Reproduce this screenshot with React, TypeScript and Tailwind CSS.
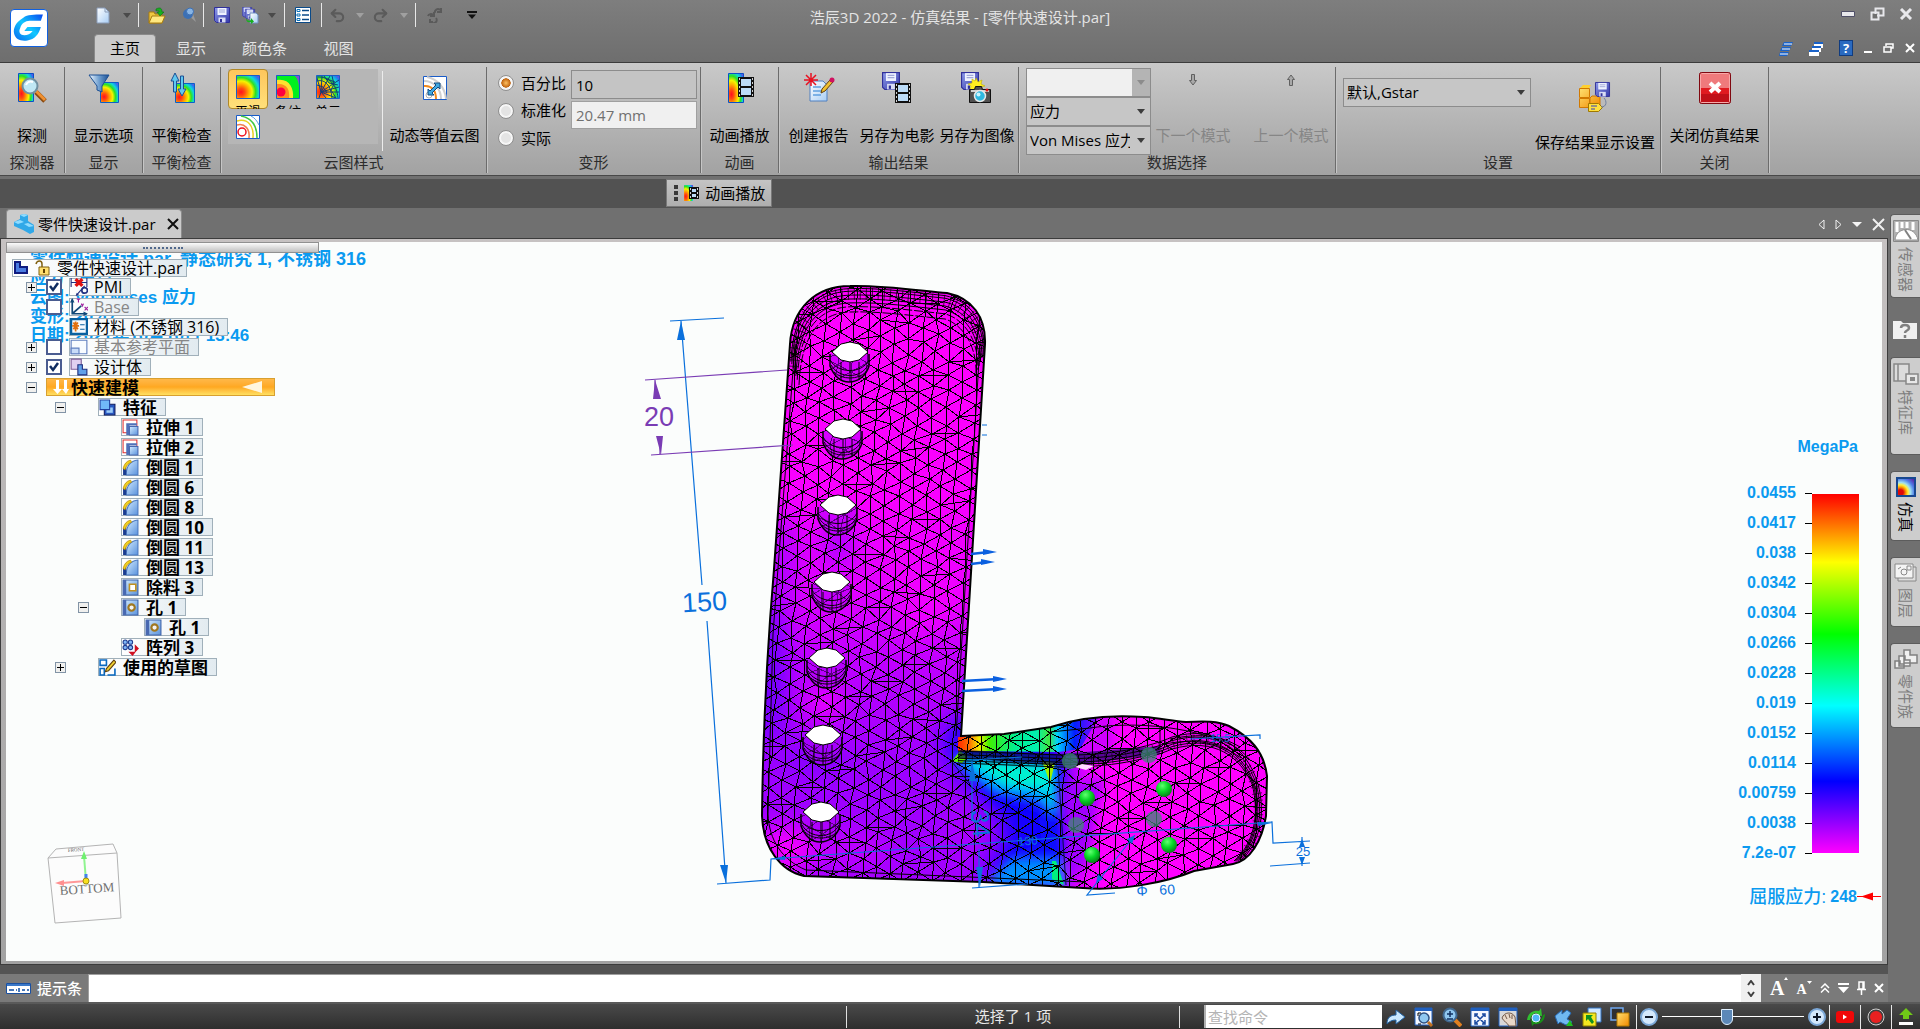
import type { ReactNode } from 'react';
import { Redo2, Undo2 } from 'lucide-react';

const blue = '#0a70dc';
const violet = '#7a3cb4';

/* ---------- shared gradients ---------- */

function Gradients() {
  return (
    <svg className="absolute h-0 w-0" aria-hidden="true">
      <defs>
        <radialGradient id="rainbow" cx="0.2" cy="0.72" r="1.05">
          <stop offset="0" stopColor="#ff1020" />
          <stop offset="0.15" stopColor="#ff4a10" />
          <stop offset="0.33" stopColor="#ffb000" />
          <stop offset="0.46" stopColor="#f4f400" />
          <stop offset="0.6" stopColor="#30e020" />
          <stop offset="0.74" stopColor="#10d8d8" />
          <stop offset="0.88" stopColor="#2080f0" />
          <stop offset="1" stopColor="#9030d0" />
        </radialGradient>
        <linearGradient id="disk" x1="0" y1="0" x2="1" y2="1">
          <stop offset="0" stopColor="#8e9bea" />
          <stop offset="1" stopColor="#3438a8" />
        </linearGradient>
        <linearGradient id="steel" x1="0" y1="0" x2="1" y2="0">
          <stop offset="0" stopColor="#f2f9ff" />
          <stop offset="0.5" stopColor="#6f9fd0" />
          <stop offset="1" stopColor="#1b4f94" />
        </linearGradient>
        <linearGradient id="paper" x1="0" y1="0" x2="1" y2="1">
          <stop offset="0" stopColor="#ffffff" />
          <stop offset="1" stopColor="#a8cdf4" />
        </linearGradient>
        <linearGradient id="solid" x1="0" y1="0" x2="1" y2="1">
          <stop offset="0" stopColor="#d4ecff" />
          <stop offset="1" stopColor="#5a92dc" />
        </linearGradient>
        <linearGradient id="gold" x1="0" y1="0" x2="1" y2="1">
          <stop offset="0" stopColor="#ffe070" />
          <stop offset="1" stopColor="#f08a00" />
        </linearGradient>
        <linearGradient id="brand" x1="1" y1="0" x2="0" y2="1">
          <stop offset="0" stopColor="#0848f0" />
          <stop offset="0.5" stopColor="#10c8ff" />
          <stop offset="1" stopColor="#0868f0" />
        </linearGradient>
        <radialGradient id="ball" cx="0.4" cy="0.3" r="0.7">
          <stop offset="0" stopColor="#60ff70" />
          <stop offset="0.5" stopColor="#08d828" />
          <stop offset="1" stopColor="#068018" />
        </radialGradient>
      </defs>
    </svg>
  );
}

type IconProps = { w?: number; h?: number; box?: string; children: ReactNode };

function Icon({ w = 16, h = w, box, children }: IconProps) {
  return (
    <svg width={w} height={h} viewBox={box ?? `0 0 ${w} ${h}`} className="shrink-0" fill="none" aria-hidden="true">
      {children}
    </svg>
  );
}

function Caret({ color = '#3c3c3c' }: { color?: string }) {
  return (
    <Icon w={8} h={5}>
      <path d="M0 0h8L4 5z" fill={color} />
    </Icon>
  );
}

function Floppy({ x = 0, y = 0, s = 16 }: { x?: number; y?: number; s?: number }) {
  return (
    <g transform={`translate(${x} ${y}) scale(${s / 16})`}>
      <path d="M0.5 0.5h15v15h-13l-2-2z" fill="url(#disk)" stroke="#30309a" />
      <path d="M3.5 1h9v7h-9z" fill="#eef2ff" />
      <path d="M5 3h6M5 5h6" stroke="#a0a8d8" />
      <path d="M4.500 10.500h7v5h-7z" fill="#d8dcf4" />
      <path d="M6 12h2v3H6z" fill="#30309a" />
    </g>
  );
}

function Film({ x, y, w, h }: { x: number; y: number; w: number; h: number }) {
  return (
    <g transform={`translate(${x} ${y})`}>
      <path d={`M0 0h${w}v${h}h-${w}z`} fill="#101010" />
      <path d={`M3 2h${w - 6}v${h / 2 - 3}h-${w - 6}zM3 ${h / 2 + 1}h${w - 6}v${h / 2 - 3}h-${w - 6}z`} fill="#bcdcf8" />
      <path d={`M1.500 1v${h - 2}M${w - 1.5} 1v${h - 2}`} stroke="#d0d0d0" strokeDasharray="2 2" />
    </g>
  );
}

/* ---------- quick access and tabs ---------- */

function QuickSeparator() {
  return <span className="h-6 w-px bg-[#e8e8e8]" />;
}

function QuickButton({ label, className, children }: { label: string; className: string; children: ReactNode }) {
  return (
    <button aria-label={label} className={`flex h-6 items-center justify-center ${className}`}>
      {children}
    </button>
  );
}

function QuickAccess() {
  return (
    <div className="flex h-[34px] items-center pb-1">
      <QuickButton label="新建" className="w-6">
        <Icon w={14} h={17}>
          <path d="M1 1h8l4 4v11H1z" fill="url(#paper)" stroke="#8a9cb8" />
          <path d="M9 1v4h4" stroke="#8a9cb8" />
        </Icon>
      </QuickButton>
      <QuickButton label="新建选项" className="w-[23px]"><Caret color="#4a4a4a" /></QuickButton>
      <QuickSeparator />
      <QuickButton label="打开" className="w-9">
        <Icon w={18}>
          <path d="M1 6h5l1 2h7v9H1z" fill="#f0c840" stroke="#a87c10" />
          <path d="M1 17l3-7h13l-3 7z" fill="#ffe880" stroke="#a87c10" />
          <path d="M8 3c4-2 6-1 6 3h2l-4 4-3-4h2c0-2-1-2-3-1z" fill="#18b020" stroke="#087010" strokeWidth=".6" />
        </Icon>
      </QuickButton>
      <QuickButton label="固定" className="w-7">
        <Icon w={16}>
          <path d="M8 9l7 6-3-8z" fill="#9a9a9a" />
          <circle cx="7" cy="7" r="5" fill="#3c70b4" />
          <circle cx="9" cy="4.500" r="3.500" fill="#88b4e4" stroke="#3c70b4" />
        </Icon>
      </QuickButton>
      <QuickSeparator />
      <QuickButton label="保存" className="w-9"><Icon w={16}><Floppy /></Icon></QuickButton>
      <QuickButton label="另存为" className="w-5">
        <Icon w={17}>
          <Floppy s={10} />
          <Floppy x={3} y={2} s={10} />
          <path d="M8 6h6l2 2v8H8z" fill="url(#paper)" stroke="#7090c0" />
          <path d="M4 11c1 3 3 3 5 2v-2l3 3.500-3 2.500v-2c-3 1-5 0-5-4z" fill="#18b020" />
        </Icon>
      </QuickButton>
      <QuickButton label="保存选项" className="w-6"><Caret color="#4a4a4a" /></QuickButton>
      <QuickSeparator />
      <QuickButton label="列表" className="w-9">
        <Icon w={16}>
          <path d="M.5.5h15v15H.5z" fill="#fff" stroke="#0a4a88" />
          <path d="M2 2.500h3v2H2zM2 7h3v2H2zM2 11.500h3v2H2z" fill="#fff" stroke="#0a70b8" />
          <path d="M7 3.500h7M7 8h7M7 12.500h7" stroke="#0a4a88" strokeWidth="1.500" />
        </Icon>
      </QuickButton>
      <QuickSeparator />
      <QuickButton label="撤销" className="w-[30px]"><Undo2 size={17} color="#5b5b5b" strokeWidth={3} /></QuickButton>
      <QuickButton label="撤销列表" className="w-4"><Caret color="#a0a0a0" /></QuickButton>
      <QuickButton label="重做" className="w-6"><Redo2 size={17} color="#5b5b5b" strokeWidth={3} /></QuickButton>
      <QuickButton label="重做列表" className="w-[23px]"><Caret color="#a0a0a0" /></QuickButton>
      <QuickSeparator />
      <QuickButton label="更新" className="w-9">
        <Icon w={16}>
          <path d="M9 6a3 3 0 0 1 5-3M15 1v4h-4M2 9a3 3 0 0 1 5-1M8 5v4H4M5 15a3 3 0 0 0 5-4M4 12v3h3" stroke="#5a5a5a" strokeWidth="2" />
        </Icon>
      </QuickButton>
      <QuickButton label="自定义快速访问" className="w-10">
        <Icon w={10} h={8}>
          <path d="M0 1h10" stroke="#111" strokeWidth="2" />
          <path d="M1 3.500h8L5 8z" fill="#111" />
        </Icon>
      </QuickButton>
    </div>
  );
}

function Header() {
  return (
    <header className="flex bg-gradient-to-b from-[#7e7e7e] to-[#6e6e6e] text-[15px] text-[#e4e4e4]">
      <div className="flex flex-1 basis-0">
        <div className="w-[91px] shrink-0 pt-[9px] pl-[10px]">
          <button aria-label="应用程序菜单" className="flex h-[38px] w-[38px] items-center justify-center rounded border border-[#1060e0] bg-white">
            <Icon w={32} h={30} box="0 -1 31 28">
              <path d="M29 0C20 0 14 0 10 3C3 7 0 13 1 18c1 6 7 8 13 7 7-1 11-6 13-13H14l-3 4h8c-2 3-5 4-8 4-4 0-6-3-4-7 1-4 5-7 9-7h11z" fill="url(#brand)" />
            </Icon>
          </button>
        </div>
        <div>
          <QuickAccess />
          <nav className="flex h-[28px] items-end pl-[3px]">
            <a href="#home" className="flex h-[28px] w-[62px] items-center justify-center rounded-t border-x border-t border-[#8a8a8a] bg-[#cbcbcb] text-black">主页</a>
            <a href="#view" className="flex h-[28px] w-[70px] items-center justify-center">显示</a>
            <a href="#colorbar" className="flex h-[28px] w-[77px] items-center justify-center">颜色条</a>
            <a href="#window" className="flex h-[28px] w-[71px] items-center justify-center">视图</a>
          </nav>
        </div>
      </div>
      <h1 className="w-[310px] shrink-0 pt-[6px] text-center text-[15px] leading-[22px] whitespace-nowrap">浩辰3D 2022 - 仿真结果 - [零件快速设计.par]</h1>
      <div className="flex flex-1 basis-0 flex-col items-end">
        <div className="flex h-[34px] items-center gap-[14px] pr-[7px] pb-[6px]">
          <button aria-label="最小化"><Icon w={15} h={6}><path d="M.5.5h13v5H.5z" fill="#e8e8ec" stroke="#505068" /></Icon></button>
          <button aria-label="还原">
            <Icon w={15} h={14}>
              <path d="M5.500 1.500h8v7h-8zM1.500 5.500h7v7h-7z" stroke="#e8e8ec" strokeWidth="2" />
              <path d="M3 7h4v4H3z" fill="#707070" />
            </Icon>
          </button>
          <button aria-label="关闭"><Icon w={14} h={12}><path d="M2 1l10 10M12 1L2 11" stroke="#e8e8ec" strokeWidth="3" /></Icon></button>
        </div>
        <div className="flex h-[28px] items-center gap-[11px] pr-[5px]">
          <button aria-label="层叠" className="mr-1">
            <Icon w={15}>
              <path d="M5 1h9l-2 4H3zM3 6h9l-2 4H1zM1 11h9l-2 4H0z" fill="#1a62c8" />
              <path d="M5 3h8M3 8h8M1 13h8" stroke="#fff" />
            </Icon>
          </button>
          <button aria-label="切换窗口" className="mr-1">
            <Icon w={15}>
              <path d="M5 1h9v6H5zM3 5h9v6H3zM0 9h10v6H0z" fill="#fff" />
              <path d="M5 1h9v2H5zM3 5h9v2H3zM0 9h10v2H0z" fill="#1a62c8" />
            </Icon>
          </button>
          <button aria-label="帮助" className="flex h-4 w-[14px] items-center justify-center border border-[#103c80] bg-[#2a6ac0] text-[13px] leading-4 font-bold text-white">?</button>
          <button aria-label="最小化文档" className="pt-2"><Icon w={8} h={3}><path d="M0 1h8" stroke="#fff" strokeWidth="2" /></Icon></button>
          <button aria-label="还原文档"><Icon w={11} h={10}><path d="M3 3V1h7v4H8M1 4h7v5H1z" stroke="#fff" strokeWidth="1.500" /></Icon></button>
          <button aria-label="关闭文档"><Icon w={10}><path d="M1 1l8 8M9 1L1 9" stroke="#fff" strokeWidth="2" /></Icon></button>
        </div>
      </div>
    </header>
  );
}

/* ---------- ribbon ---------- */

function Group({ label, width, children }: { label: string; width: string; children: ReactNode }) {
  return (
    <section className={`flex shrink-0 flex-col border-r border-[#6c6c6c] shadow-[1px_0_0_#c6c6c6] ${width}`}>
      <div className="flex h-[85px] justify-center">{children}</div>
      <h2 className="text-center text-[15px] leading-5 whitespace-nowrap text-[#2c2c2c]">{label}</h2>
    </section>
  );
}

function RibbonButton({ label, width = 'w-full', children }: { label: string; width?: string; children: ReactNode }) {
  return (
    <button className={`flex shrink-0 flex-col items-center gap-[19px] pt-[3px] whitespace-nowrap disabled:text-[#868686] ${width}`}>
      <span className="flex h-9 items-center">{children}</span>
      <span className="text-[15px] leading-5">{label}</span>
    </button>
  );
}

function DropDown({ label, options, width, disabled }: { label: string; options: string[]; width: string; disabled?: boolean }) {
  return (
    <div className={`relative h-[29px] ${width}`}>
      <select
        aria-label={label}
        disabled={disabled}
        className="h-full w-full appearance-none border border-[#8c8c8c] bg-[#c6c6c6] pr-5 pl-[3px] text-[15px] text-black disabled:bg-[#f0f0f0]"
      >
        {options.map((o) => <option key={o}>{o}</option>)}
      </select>
      <span className={`pointer-events-none absolute inset-y-px right-px flex w-[18px] items-center justify-center ${disabled ? 'bg-[#b4b4b4]' : ''}`}>
        <Caret color={disabled ? '#8c8c8c' : '#3c3c3c'} />
      </span>
    </div>
  );
}

function Contour({ children }: { children?: ReactNode }) {
  return (
    <Icon w={24}>
      <path d="M.5.5h23v23H.5z" fill="url(#rainbow)" />
      {children}
      <path d="M.5.5h23v23H.5z" stroke="#1a5cc8" />
    </Icon>
  );
}

function Gallery() {
  const items = [
    { name: '平滑', icon: <Contour /> },
    {
      name: '条纹',
      icon: (
        <Contour>
          <path d="M1 1h22v22H1z" fill="#8050d0" />
          <path d="M1 1h18c3 3 4 8 4 12v10H1z" fill="#00f020" />
          <path d="M1 5c12-2 17 8 16 18H1z" fill="#ffe030" />
          <path d="M1 9c10-1 13 6 12 14H1z" fill="#ff8a20" />
          <circle cx="5" cy="17" r="4.500" fill="#ff0040" />
        </Contour>
      ),
    },
    {
      name: '单元',
      icon: (
        <Contour>
          <path d="M5 17L1 3M5 17L6 1M5 17L14 1M5 17L23 5M5 17L23 12M5 17h18M5 17l15 6M5 17l5 6M5 17l-2 6M1 10l6 2 4 6M1 6c8-2 14 4 15 17M1 2c12-1 20 8 21 21M8 1l5 7 9 2M16 1l2 8-3 6 5 8M11 4l8 3" stroke="#104078" />
        </Contour>
      ),
    },
  ];
  return (
    <div className="mt-[2px] h-[75px] w-[150px] overflow-hidden bg-[#b6b6b6]">
      <div className="flex h-10 overflow-hidden">
        {items.map((item, i) => (
          <button
            key={item.name}
            className={
              i === 0
                ? 'flex w-10 flex-col items-center rounded-sm border border-[#b08828] bg-gradient-to-b from-[#fdc65c] to-[#ffe07a] pt-[5px] text-[13px] leading-4'
                : 'flex w-10 flex-col items-center pt-[6px] text-[13px] leading-4'
            }
          >
            {item.icon}
            <span className="mt-1">{item.name}</span>
          </button>
        ))}
      </div>
      <button aria-label="等值线" className="flex w-10 justify-center pt-[6px]">
        <Icon w={24}>
          <path d="M.5.5h23v23H.5z" fill="#fff" stroke="#1a5cc8" />
          <circle cx="6" cy="17" r="4" stroke="#f01020" strokeWidth="1.500" />
          <path d="M1 10c8-2 13 4 12 13" stroke="#f08050" strokeWidth="1.500" />
          <path d="M1 6c11-3 17 5 16 17" stroke="#e8d020" strokeWidth="1.500" />
          <path d="M5 1c11 2 16 9 16 22" stroke="#40c840" strokeWidth="1.500" />
          <path d="M15 1c4 2 6 5 8 9" stroke="#50a0e0" />
        </Icon>
      </button>
    </div>
  );
}

function Deformation() {
  const modes = ['百分比', '标准化', '实际'];
  return (
    <div className="flex w-full pt-[2px] pl-[11px]">
      <div className="flex w-[73px] flex-col">
        {modes.map((m, i) => (
          <label key={m} className="flex h-[29px] items-center gap-[7px] text-[15px] whitespace-nowrap">
            <input
              type="radio"
              name="deformation"
              defaultChecked={i === 0}
              className="h-4 w-4 shrink-0 appearance-none rounded-full border border-[#8e8e8e] bg-[#e4e4e4] shadow-[inset_0_0_0_2px_#f6f6f6] checked:bg-[radial-gradient(circle,#ffc060_0%,#c06410_45%,#f0f0f0_50%)]"
            />
            {m}
          </label>
        ))}
      </div>
      <div className="flex w-[126px] flex-col gap-[2px] pt-px">
        <input aria-label="百分比值" defaultValue="10" className="h-[29px] w-full border border-[#8c8c8c] bg-[#c4c4c4] px-1 text-[15px]" />
        <input aria-label="标准化值" defaultValue="20.47 mm" disabled className="h-[28px] w-full border border-[#a0a0a0] bg-[#f0f0f0] px-1 text-[15px] text-[#707070]" />
      </div>
    </div>
  );
}

function Ribbon() {
  return (
    <div className="flex h-[114px] overflow-hidden border-t border-b border-t-[#3c3c3c] border-b-[#484848] bg-gradient-to-b from-[#c9c9c9] to-[#a2a2a2] pt-1 pb-[2px]">
      <Group label="探测器" width="w-[65px]">
        <RibbonButton label="探测">
          <Icon w={32}>
            <path d="M2.500 1.500h15v28h-15z" fill="url(#rainbow)" stroke="#0a50c8" />
            <path d="M20 20l9 9" stroke="#8a4a10" strokeWidth="5" />
            <path d="M20 19l9 9" stroke="#f09030" strokeWidth="3" />
            <circle cx="14" cy="14" r="7.500" fill="#c0e8f4" stroke="#7090a0" strokeWidth="2" />
            <path d="M10 13c1-3 4-4 7-3" stroke="#fff" strokeWidth="2" />
          </Icon>
        </RibbonButton>
      </Group>
      <Group label="显示" width="w-[78px]">
        <RibbonButton label="显示选项">
          <Icon w={32}>
            <path d="M12.500 10.500h18v20h-18z" fill="url(#rainbow)" stroke="#0a60c8" />
            <path d="M1 3h20l-7 11v6l-5-2v-4z" fill="url(#steel)" stroke="#1b4f94" />
          </Icon>
        </RibbonButton>
      </Group>
      <Group label="平衡检查" width="w-[78px]">
        <RibbonButton label="平衡检查">
          <Icon w={28} h={32}>
            <path d="M7.500 11.500h19v19h-19z" fill="url(#rainbow)" stroke="#0a60c8" />
            <path d="M7 1l4 8H8.500v11h-3V9H3z" fill="#60c8f0" stroke="#1b4f94" />
            <path d="M14 24l-4-7h2.500V4h3v13H18z" fill="#60c8f0" stroke="#1b4f94" />
          </Icon>
        </RibbonButton>
      </Group>
      <Group label="云图样式" width="w-[266px]">
        <div className="flex w-full pl-[7px]">
          <Gallery />
          <span className="mt-1 ml-1 h-20 w-px bg-[#ececec]" />
          <RibbonButton label="动态等值云图" width="w-[103px]">
            <Icon w={24}>
              <path d="M.5.5h23v23H.5z" fill="#fff" stroke="#1a5cc8" />
              <path d="M4 1c10 2 18 10 19 22M1 5c10 0 17 8 17 18" stroke="#d0d0d0" strokeWidth="2" />
              <path d="M1 10c8-1 12 5 12 13" stroke="#f08a20" strokeWidth="2" />
              <circle cx="6" cy="19" r="3" stroke="#b0b0b0" />
              <path d="M5 19v-6l2 2 6-6-2-2h6v6l-2-2-6 6 2 2z" fill="#40a8e0" stroke="#104a80" />
            </Icon>
          </RibbonButton>
        </div>
      </Group>
      <Group label="变形" width="w-[214px]"><Deformation /></Group>
      <Group label="动画" width="w-[78px]">
        <RibbonButton label="动画播放">
          <Icon w={30} h={32}>
            <path d="M3.500 1.500h15v29h-15z" fill="url(#rainbow)" stroke="#0a50c8" />
            <Film x={13} y={5} w={16} h={20} />
          </Icon>
        </RibbonButton>
      </Group>
      <Group label="输出结果" width="w-[240px]">
        <RibbonButton label="创建报告" width="w-[77px]">
          <Icon w={32}>
            <path d="M7 9h13l4 4v16H7z" fill="url(#paper)" stroke="#5080c0" />
            <path d="M10 15h8M10 19h10M10 23h8" stroke="#60a0e0" strokeWidth="1.500" />
            <path d="M8 1v13M1 8h14M3 3l10 10M13 3L3 13" stroke="#e81020" strokeWidth="1.500" />
            <path d="M18 21l1-4 8-9 3 2-8 9z" fill="#f0c030" stroke="#604010" />
            <circle cx="29" cy="8" r="2.500" fill="#d01060" />
          </Icon>
        </RibbonButton>
        <RibbonButton label="另存为电影" width="w-[80px]">
          <Icon w={30} h={32}><Floppy s={18} /><Film x={13} y={11} w={16} h={20} /></Icon>
        </RibbonButton>
        <RibbonButton label="另存为图像" width="w-[80px]">
          <Icon w={32}>
            <Floppy s={18} />
            <path d="M15 6l2 4 4-2-1 4 4 2-5 1 1 3H9l1-4-3-2 4-1 0-4 3 2z" fill="#ffee20" stroke="#c0b000" strokeWidth=".6" />
            <path d="M8.500 17.500h5l1-3h6l1 3h8v13h-21z" fill="#505050" stroke="#101010" />
            <path d="M10 19h18" stroke="#d0d0d0" strokeWidth="2" />
            <circle cx="19" cy="24" r="5.500" fill="#30b8e0" stroke="#e8e8e8" strokeWidth="1.500" />
            <circle cx="17.500" cy="22.500" r="2" fill="#c8f4ff" />
            <circle cx="26" cy="18" r="1.500" fill="#e01010" />
          </Icon>
        </RibbonButton>
      </Group>
      <Group label="数据选择" width="w-[317px]">
        <div className="flex w-full pl-[7px]">
          <div className="mt-px flex h-[87px] w-[125px] shrink-0 flex-col">
            <DropDown label="模式" options={['']} width="w-full" disabled />
            <DropDown label="结果类型" options={['应力', '位移']} width="w-full" />
            <DropDown label="结果分量" options={['Von Mises 应力', '最大主应力']} width="w-full" />
          </div>
          <div className="ml-1 flex gap-[22px] text-[#868686]">
            <RibbonButton label="下一个模式" width="w-[76px]">
              <span className="pb-4"><Icon w={8} h={12}><path d="M2.500 .5h3v6H7.500L4 11 .5 6.500h2z" fill="#a8a8a8" stroke="#606060" /></Icon></span>
            </RibbonButton>
            <RibbonButton label="上一个模式" width="w-[76px]">
              <span className="pb-4"><Icon w={8} h={12}><path d="M2.500 11.500h3v-6H7.500L4 1 .5 5.500h2z" fill="#a8a8a8" stroke="#606060" /></Icon></span>
            </RibbonButton>
          </div>
        </div>
      </Group>
      <Group label="设置" width="w-[325px]">
        <div className="flex w-full pt-[10px] pl-[7px]">
          <div className="pt-px"><DropDown label="设置方案" options={['默认,Gstar', '默认']} width="w-[188px]" /></div>
          <RibbonButton label="保存结果显示设置" width="w-[128px]">
            <Icon w={32}>
              <path d="M1 7l3-3h8l-2 3v19H1z" fill="#ffd030" />
              <path d="M.5 7.500h10v9H.5zM.5 17.500h10v9H.5zM11 17l2-2h8v10H11z" fill="url(#gold)" stroke="#d07800" />
              <Floppy x={16} y={1} s={15} />
              <path d="M9.500 22.500h10l4 4-4 4h-10z" fill="#ffe040" stroke="#a07800" />
              <path d="M12 25h6M12 28h4" stroke="#3040c0" />
              <path d="M22 26c6 0 6-6 3-9" stroke="#7080a0" />
            </Icon>
          </RibbonButton>
        </div>
      </Group>
      <Group label="关闭" width="w-[108px]">
        <RibbonButton label="关闭仿真结果">
          <Icon w={32}>
            <rect x=".5" y=".5" width="31" height="31" rx="2" fill="#c01018" stroke="#800810" />
            <path d="M2 2h28v14H2z" fill="#ef7a7c" />
            <path d="M2 16h28v6H2z" fill="#e01a20" />
            <path d="M11 11l10 9M21 11l-10 9" stroke="#fff" strokeWidth="4" />
            <rect x="1.500" y="1.500" width="29" height="29" rx="1" stroke="#f8a8a8" />
          </Icon>
        </RibbonButton>
      </Group>
    </div>
  );
}

/* ---------- feature tree ---------- */

type NodeKind = 'part' | 'pmi' | 'base' | 'material' | 'plane' | 'body' | 'mode' | 'feature' | 'extrude' | 'round' | 'cut' | 'hole' | 'pattern' | 'sketch';

type TreeRow = {
  name: string;
  kind: NodeKind;
  indent: string;
  toggle?: '+' | '-';
  check?: boolean;
  dim?: boolean;
};

// space in front of the toggle, one step per level
const L1 = 'pl-5';
const L2 = 'pl-[49px]';
const L3 = 'pl-[72px]';
const L4 = 'pl-[95px]';

const rows: TreeRow[] = [
  { name: 'PMI', kind: 'pmi', indent: L1, toggle: '+', check: true },
  { name: 'Base', kind: 'base', indent: L1, check: false, dim: true },
  { name: '材料 (不锈钢 316)', kind: 'material', indent: L1 },
  { name: '基本参考平面', kind: 'plane', indent: L1, toggle: '+', check: false, dim: true },
  { name: '设计体', kind: 'body', indent: L1, toggle: '+', check: true },
  { name: '快速建模', kind: 'mode', indent: L1, toggle: '-' },
  { name: '特征', kind: 'feature', indent: L2, toggle: '-' },
  { name: '拉伸 1', kind: 'extrude', indent: L3 },
  { name: '拉伸 2', kind: 'extrude', indent: L3 },
  { name: '倒圆 1', kind: 'round', indent: L3 },
  { name: '倒圆 6', kind: 'round', indent: L3 },
  { name: '倒圆 8', kind: 'round', indent: L3 },
  { name: '倒圆 10', kind: 'round', indent: L3 },
  { name: '倒圆 11', kind: 'round', indent: L3 },
  { name: '倒圆 13', kind: 'round', indent: L3 },
  { name: '除料 3', kind: 'cut', indent: L3 },
  { name: '孔 1', kind: 'hole', indent: L3, toggle: '-' },
  { name: '孔 1', kind: 'hole', indent: L4 },
  { name: '阵列 3', kind: 'pattern', indent: L3 },
  { name: '使用的草图', kind: 'sketch', indent: L2, toggle: '+' },
];

const nodeArt: Record<NodeKind, ReactNode> = {
  part: <path d="M2 2h5v5h7v6H2z" fill="#4a7ce0" stroke="#101c80" strokeWidth="2" />,
  pmi: (
    <>
      <path d="M1 0v8M15 0v8M1 4h14M6 15l7-8" stroke="#203080" />
      <path d="M5 1l6 6M11 1L5 7" stroke="#e01010" strokeWidth="3" />
      <circle cx="13" cy="11" r="2.500" stroke="#203080" strokeWidth="1.500" />
      <path d="M5 16l3-1-2-2z" fill="#203080" />
    </>
  ),
  base: (
    <>
      <path d="M2 1v13h13M2 14l8-7" stroke="#104878" strokeWidth="1.500" />
      <path d="M0 4l2-4 2 4zM12 12l4 2-4 2z" fill="#104878" />
      <path d="M6 1h3M7.500 1v3M10 5l1 2 1-2M13 8l3 3M16 8l-3 3" stroke="#a020a0" />
    </>
  ),
  material: (
    <>
      <path d="M1 1h14v13H1z" fill="#f4faff" stroke="#0860a0" strokeWidth="2" />
      <path d="M5 3v9M2 7h6M3 4l4 6M7 4l-4 6" stroke="#e07010" strokeWidth="1.500" />
      <path d="M9 6h4M9 10h4" stroke="#0860a0" />
    </>
  ),
  plane: (
    <>
      <path d="M1 2h14v12H1z" fill="#f8fcff" stroke="#6080c0" />
      <path d="M1 9h7v5H1z" fill="#c8dcf8" stroke="#6080c0" />
    </>
  ),
  body: (
    <>
      <path d="M1 1h9v9H1z" fill="#e0d0f0" stroke="#806098" />
      <path d="M7 6h4v4h4v5H7z" fill="#60a0e8" stroke="#203080" />
    </>
  ),
  mode: <path d="M3 1v9H0l4.500 5L9 10H6V1zM11 1v9H9l4 5 3-5h-2V1z" fill="#fff" />,
  feature: (
    <>
      <path d="M5 5h10v10H5z" fill="#2858c0" stroke="#101c60" />
      <path d="M7 8h6v5H7z" fill="#9cccf8" />
      <path d="M1 1h9v9H1z" fill="#70b8f8" stroke="#2040a0" />
    </>
  ),
  extrude: (
    <>
      <path d="M1 1h13v12H1z" fill="#fff" stroke="#e03030" />
      <path d="M4 4h10v2H7v9H4z" fill="#5070b8" />
      <path d="M7 7h8v8H7z" fill="url(#solid)" stroke="#4868b0" />
    </>
  ),
  round: (
    <>
      <path d="M15 1v14H4c0-7 3-13 11-14z" fill="url(#solid)" stroke="#4a78c0" />
      <path d="M1 15V9l3-2v8z" fill="#1a3c90" />
      <path d="M1 9c1-4 3-7 7-8l1 2C6 4 4 6 3 10z" fill="#f0d020" stroke="#b08000" strokeWidth=".6" />
    </>
  ),
  cut: (
    <>
      <path d="M1 1h14v14H1z" fill="url(#solid)" stroke="#3a60a8" />
      <path d="M1 1h3v14H1z" fill="#4868b0" />
      <path d="M7 5h6v6H7z" fill="#fff" stroke="#c09020" strokeWidth="1.500" />
    </>
  ),
  hole: (
    <>
      <path d="M1 1h14v14H1z" fill="url(#solid)" stroke="#3a60a8" />
      <path d="M1 1h3v14H1z" fill="#4868b0" />
      <circle cx="9" cy="8" r="3" fill="#f4f4f4" stroke="#a07820" strokeWidth="2" />
    </>
  ),
  pattern: (
    <>
      <g fill="#80b8f8" stroke="#203c90">
        <circle cx="3" cy="3" r="2" /><circle cx="8" cy="3" r="2" /><circle cx="3" cy="8" r="2" /><circle cx="8" cy="8" r="2" />
      </g>
      <path d="M12 5l4 4-4 4zM6 12h7l-3 4z" fill="#d01020" />
    </>
  ),
  sketch: (
    <>
      <path d="M1 1h6v5H1zM1 9h4v6H1zM8 15h7V9" stroke="#0868c0" strokeWidth="1.500" />
      <path d="M6 12l1-3 7-8 2 2-7 8z" fill="#f0d030" stroke="#604010" />
    </>
  ),
};

const boxStyle = 'flex h-[18px] items-center border border-[#a0b0ba] bg-gradient-to-r from-white to-[#e2ebf0] leading-none whitespace-nowrap';

function Toggle({ sign }: { sign?: '+' | '-' }) {
  if (!sign) return <span className="w-[11px] shrink-0" />;
  return (
    <button aria-label={sign === '+' ? '展开' : '折叠'} className="h-[11px] w-[11px] shrink-0 border border-[#8294a6] bg-[#f0f0ee]">
      <Icon w={9}><path d={sign === '+' ? 'M1 4.500h7M4.500 1v7' : 'M1 4.500h7'} stroke="#000" /></Icon>
    </button>
  );
}

function TreeNode({ row }: { row: TreeRow }) {
  const { name, kind, indent, toggle, check, dim } = row;
  if (kind === 'mode') {
    return (
      <li className={`flex h-5 items-center gap-[9px] ${indent}`}>
        <Toggle sign={toggle} />
        <div className="flex h-[18px] w-[229px] items-center border border-[#d8a030] bg-gradient-to-b from-[#ffb848] via-[#ffa820] to-[#ffe060] pl-[6px] font-bold">
          <Icon w={16}>{nodeArt.mode}</Icon>
          <span className="ml-[2px] flex-1 text-[17px] leading-none">{name}</span>
          <span className="pr-3"><Icon w={20} h={12}><path d="M0 6L20 0v12z" fill="#fff6e0" /></Icon></span>
        </div>
      </li>
    );
  }
  if (indent === L1) {
    return (
      <li className={`flex h-5 items-center ${indent}`}>
        <Toggle sign={toggle} />
        {check === undefined ? (
          <span className="w-8 shrink-0" />
        ) : (
          <span className="relative mr-[7px] ml-[9px] h-4 w-4 shrink-0">
            <input type="checkbox" aria-label={name} defaultChecked={check} className="peer block h-4 w-4 appearance-none border-2 border-[#4a5c90] bg-white" />
            <svg viewBox="0 0 16 16" className="pointer-events-none invisible absolute inset-0 h-4 w-4 peer-checked:visible" fill="none">
              <path d="M4 7l3 4 5-7" stroke="#102c60" strokeWidth="2.500" />
            </svg>
          </span>
        )}
        <div className={`${boxStyle} pr-2 ${dim ? 'text-[#868686]' : ''}`}>
          <Icon w={18} box="0 0 16 16">{nodeArt[kind]}</Icon>
          <span className="ml-[6px]">{name}</span>
        </div>
      </li>
    );
  }
  return (
    <li className={`flex h-5 items-center gap-8 ${indent}`}>
      <Toggle sign={toggle} />
      <div className={`${boxStyle} pr-2 text-[17px] font-bold`}>
        <Icon w={17} box="0 0 16 16">{nodeArt[kind]}</Icon>
        <span className="ml-[7px]">{name}</span>
      </div>
    </li>
  );
}

function FeatureTree() {
  return (
    <aside className="relative w-[313px] text-[16px]">
      <div className="flex h-[11px] items-center justify-center border border-[#909090] bg-gradient-to-b from-[#fafafa] to-[#c0c0c0]">
        <span className="w-10 border-t-2 border-dotted border-[#50688c]" />
      </div>
      <div className="pt-[6px] pl-[6px]">
        <div className={`${boxStyle} w-[175px]`}>
          <Icon w={16}>{nodeArt.part}</Icon>
          <span className="mx-[6px]">
            <Icon w={16}>
              <path d="M4 7h10v8H4z" fill="#ffe070" stroke="#806010" />
              <path d="M1 4c1-4 6-4 6 0v3" stroke="#806010" strokeWidth="1.500" />
              <path d="M9 9v4" stroke="#604000" strokeWidth="2" />
            </Icon>
          </span>
          零件快速设计.par
        </div>
      </div>
      <ul>
        {rows.map((row, i) => <TreeNode key={i} row={row} />)}
      </ul>
    </aside>
  );
}

/* ---------- model ---------- */

const outline =
  'M790 345C792 310 815 287 850 287C880 286 915 291 947 294C972 299 986 318 985 345L961 737L1004 735L1051 728C1080 718 1115 716 1144 718C1160 719 1172 722 1186 723C1205 722 1218 722 1229 727C1250 738 1264 752 1267 777L1266 817C1262 842 1250 862 1233 865L1194 872C1165 884 1120 892 1083 889L983 883L804 877C780 872 763 848 762 817C763 730 768 640 774 570Z';

const holes = [
  [850, 353], [843, 430], [838, 506], [832, 583], [827, 659], [823, 736], [821, 813],
];

function jitter(i: number, j: number, k: number) {
  const n = Math.sin(i * 127.1 + j * 311.7 + k * 74.7) * 43758.5453;
  return (n - Math.floor(n) - 0.5) * 4.5;
}

function meshPoint(i: number, j: number) {
  const y = 262 + j * 16 + (i % 2 ? 8 : 0);
  const x = 772 + (i - 2) * 14 - (y - 290) * 0.062;
  return [x + jitter(i, j, 1), y - (x - 770) * 0.03 + jitter(i, j, 2)];
}

function buildMesh() {
  let d = '';
  for (let i = 0; i < 44; i++) {
    for (let j = 0; j < 44; j++) {
      if (j < 26 && i > 20) continue;
      const [x, y] = meshPoint(i, j);
      const to = [meshPoint(i, j + 1), meshPoint(i + 1, j), meshPoint(i + 1, i % 2 ? j + 1 : j - 1)];
      // extra spokes give some nodes the denser star pattern
      if ((i * 7 + j * 5) % 9 === 0) to.push(meshPoint(i + 2, j));
      for (const [tx, ty] of to) d += `M${x.toFixed(0)} ${y.toFixed(0)}L${tx.toFixed(0)} ${ty.toFixed(0)}`;
    }
  }
  return d;
}

const mesh = buildMesh();

function topRim(t: number) {
  const dx = t * 9;
  const dy = t * 26;
  return `M${790 + dx} ${360 + dy}C${792 + dx} ${310 + dy} ${815 + dx / 2} ${288 + dy} 850 ${287 + dy}C880 ${286 + dy} 915 ${291 + dy} 945 ${294 + dy}C${970 - dx} ${299 + dy} ${986 - dx} ${318 + dy} ${985 - dx} ${350 + dy}`;
}

function armRim(t: number) {
  const s = t * 12;
  return `M958 ${752 + s}L1060 ${756 + s}C1110 ${757 + s} 1150 ${748 + s} 1172 ${738 + s}C1215 ${726 + s} ${1246 - s / 2} ${746 + s} ${1258 - s / 2} 785C${1266 - s / 2} 815 ${1260 - s / 2} 845 ${1240 - s / 2} 862`;
}

function Ball({ x, y, faded }: { x: number; y: number; faded?: boolean }) {
  return <circle cx={x} cy={y} r="8" fill={faded ? '#408878' : 'url(#ball)'} opacity={faded ? 0.75 : 1} />;
}

function LoadArrow({ x, y, len }: { x: number; y: number; len: number }) {
  return (
    <g>
      <path d={`M${x} ${y}l${len - 8} -2`} stroke="#0a60e0" strokeWidth="2.500" />
      <path d={`M${x + len - 14} ${y - 5}l14 3l-14 3z`} fill="#0a60e0" />
    </g>
  );
}

function Model() {
  return (
    <svg viewBox="620 270 720 640" className="absolute top-[27px] left-[614px] h-[640px] w-[720px]" fill="none" aria-label="应力云图">
      <defs>
        <clipPath id="part"><path d={outline} /></clipPath>
        <filter id="soft" x="-40%" y="-40%" width="180%" height="180%"><feGaussianBlur stdDeviation="12" /></filter>
        <filter id="fine" x="-40%" y="-40%" width="180%" height="180%"><feGaussianBlur stdDeviation="5" /></filter>
        <linearGradient id="body" gradientUnits="userSpaceOnUse" x1="900" y1="290" x2="860" y2="890">
          <stop offset="0" stopColor="#ff00ff" />
          <stop offset="0.35" stopColor="#f800ff" />
          <stop offset="0.5" stopColor="#e000ff" />
          <stop offset="0.65" stopColor="#b800ff" />
          <stop offset="0.8" stopColor="#9c00ff" />
          <stop offset="1" stopColor="#a400ff" />
        </linearGradient>
        <linearGradient id="strip" gradientUnits="userSpaceOnUse" x1="958" y1="0" x2="1100" y2="0">
          <stop offset="0" stopColor="#ff2800" />
          <stop offset="0.08" stopColor="#ff7000" />
          <stop offset="0.15" stopColor="#f0f000" />
          <stop offset="0.22" stopColor="#40f000" />
          <stop offset="0.4" stopColor="#00f090" />
          <stop offset="0.55" stopColor="#00f0b0" />
          <stop offset="0.64" stopColor="#40e840" />
          <stop offset="0.7" stopColor="#00d0ff" />
          <stop offset="0.82" stopColor="#0020ff" />
          <stop offset="1" stopColor="#a000ff" />
        </linearGradient>
      </defs>

      <g clipPath="url(#part)">
        <path d={outline} fill="url(#body)" />
        <g filter="url(#soft)">
          <path d="M1075 690h220v220h-230l20-60z" fill="#ff00ff" />
          <path d="M885 540l85-20v90l-60 30z" fill="#f000ff" />
          <ellipse cx="770" cy="670" rx="14" ry="80" fill="#6400ff" />
          <ellipse cx="782" cy="560" rx="14" ry="50" fill="#a800ff" />
          <ellipse cx="838" cy="545" rx="16" ry="24" fill="#a800ff" />
          <ellipse cx="824" cy="704" rx="15" ry="16" fill="#ff00ff" />
          <ellipse cx="785" cy="850" rx="30" ry="22" fill="#f800ff" />
          <ellipse cx="850" cy="850" rx="40" ry="14" fill="#c400ff" />
          <ellipse cx="815" cy="760" rx="30" ry="12" fill="#7c00ff" />
          <path d="M940 745l20-30 110 30 8 135h-100l24-44-30-46z" fill="#1400ff" />
          <ellipse cx="970" cy="835" rx="24" ry="20" fill="#a800ff" />
        </g>
        <g filter="url(#fine)">
          <path d="M950 755l110 8 2 125-70-4 20-30 30-10-4-30-40-12z" fill="#0810ff" />
          <path d="M990 880l20-18 50 0 6 26-76-2z" fill="#0090ff" />
          <path d="M955 756l100 8-2 42-20-8-40-8-28-18z" fill="#00a8ff" />
          <path d="M966 760l84 6v24l-44-4z" fill="#00f0d0" />
          <path d="M1040 764l12 2 2 50-6-10z" fill="#00e8e0" />
          <path d="M1064 790l40-12-20 90-16 4z" fill="#a000ff" />
          <path d="M1084 720l30-8v40l-40 8z" fill="#d000ff" />
        </g>
        <path d="M952 762l8-10 8 6-6 6z" fill="#60f000" />
        <path d="M1042 762l13 2-5 20z" fill="#a0f000" />
        <path d="M1052 862l4 0 8 24-12-6z" fill="#00f080" />
        <path d="M958 738l46-3 47-7 49-12-20 34-22 3-100-1z" fill="url(#strip)" />
        <path d="M960 751l100 4 100-8v8l-90 12-112-8z" fill="#080860" opacity=".65" />
        <path d={mesh} stroke="#000" strokeWidth="1" shapeRendering="crispEdges" />
        {[0.1, 0.2, 0.35, 0.5, 0.65, 0.8, 1].map((t) => (
          <path key={t} d={topRim(t)} stroke="#000" strokeDasharray={t < 0.7 ? undefined : '9 2'} />
        ))}
        {[0, 0.3, 0.6, 0.8, 1].map((t) => <path key={t} d={armRim(t)} stroke="#000" />)}
        <path d={topRim(0.3)} stroke="#000" strokeWidth="12" strokeDasharray="1 5" opacity=".7" />
        <path d={armRim(0.5)} stroke="#000" strokeWidth="10" strokeDasharray="1 6" opacity=".6" />
        <path d="M795 345l-22 290-5 180c1 26 14 46 38 56l280 12M980 345l-24 392M1050 733l40-4c40-6 80-2 110 6s40 14 50 26" stroke="#000" />
        <path d="M1160 728v20M1170 740c30-6 50-4 70 8M1165 745c30-6 54-2 76 14" stroke="#000" />
        <path d="M1058 768l4 60 4 58M952 763l18 22" stroke="#001040" />
      </g>
      <path d={outline} stroke="#000" strokeWidth="2" />

      {holes.map(([x, y]) => (
        <g key={y}>
          <path d={`M${x - 20} ${y + 2}v12c4 10 10 16 19 16s17-6 20-16v-12`} fill="#b400ff" fillOpacity=".5" stroke="#000" strokeWidth="1.500" />
          <path d={`M${x - 20} ${y + 8}c8 14 32 14 39 0M${x - 19} ${y + 13}c8 14 30 14 37 0M${x - 16} ${y + 20}c8 8 24 8 32 0M${x - 9} ${y + 10}v18M${x} ${y + 10}v20M${x + 9} ${y + 10}v18`} stroke="#000" />
          <path d={`M${x - 18} ${y}l9-8 9-2 9 2 9 8-9 8-9 2-9-2z`} fill="#fff" stroke="#000" />
        </g>
      ))}
      <path d="M1075 768l7-3 12 2-8 4z" fill="#ffd8ff" />

      <g stroke={blue} strokeWidth="1.200">
        <path d="M670 322l54-3M681 322l21 264M707 622l19 262M717 885l53-4 1-21 501-37 1 21 37-2M1270 867l40-3M1302 838v10M1302 858v9" />
        <path d="M972 762v60M979 850v38M972 889l56-4M972 761l50-3M1135 836l-48 60 28-2M1190 740l70-4v4M982 426h5M982 436h5" />
      </g>
      <g fill={blue}>
        <path d="M681 322l-4 19h8zM726 884l-6-18h8zM972 762l-3 20h7zM980 888l-4-20h7zM771 860l14-3v4zM1272 824l-14-1v4zM1135 836l-8 4 5 5zM1096 884l2-9 5 5zM1302 840l-3 8h6zM1302 866l-3-8h6z" />
      </g>
      <g stroke={violet} strokeWidth="1.200"><path d="M645 381l142-10M651 456l142-10M655 381v10M660 456v-10" /></g>
      <g fill={violet}><path d="M655 381l-2 19h8zM661 456l-5-19h7z" /></g>
      <g fontFamily="Liberation Sans, sans-serif" textAnchor="middle">
        <text x="705" y="612" fontSize="27" fill={blue} transform="rotate(-3 705 612)">150</text>
        <text x="659" y="427" fontSize="27" fill={violet}>20</text>
        <text x="972" y="825" fontSize="25" fill={blue} transform="rotate(86 972 825)">34</text>
        <text x="1028" y="846" fontSize="12" fill={blue} transform="rotate(-4 1028 846)">130</text>
        <text x="1220" y="743" fontSize="10" fill={blue}>15.5</text>
        <text x="1303" y="857" fontSize="13" fill={blue}>25</text>
        <text x="1156" y="896" fontSize="14" fill={blue} transform="rotate(-3 1156 896)">Φ&#160;&#160;&#160;60</text>
      </g>

      <LoadArrow x={971} y={555} len={26} />
      <LoadArrow x={971} y={565} len={24} />
      <LoadArrow x={962} y={682} len={45} />
      <LoadArrow x={962} y={692} len={45} />
      <Ball x={1070} y={762} faded />
      <Ball x={1149} y={756} faded />
      <Ball x={1076} y={826} faded />
      <Ball x={1154} y={820} faded />
      <Ball x={1087} y={799} />
      <Ball x={1164} y={790} />
      <Ball x={1092} y={856} />
      <Ball x={1169} y={846} />
    </svg>
  );
}

function ViewCube() {
  return (
    <svg viewBox="44 840 84 90" className="absolute bottom-8 left-[38px] h-[90px] w-[84px]" fill="none" aria-label="视图方向">
      <path d="M48 859l69-5 4 65-66 5zM48 859l8-9 57-5 4 9" stroke="#b4b4b4" fill="#fcfcfc" />
      <text x="68" y="853" fontSize="5" fill="#606060" fontFamily="Liberation Serif, serif" transform="rotate(-4 68 853)">FRONT</text>
      <text x="60" y="896" fontSize="13" fill="#707070" fontFamily="Liberation Serif, serif" transform="rotate(-4 60 896)">BOTTOM</text>
      <path d="M86 882l-2-25" stroke="#90f490" strokeWidth="2" />
      <path d="M81 860l3-8 3 8z" fill="#70f070" />
      <path d="M86 882l-24 2" stroke="#ff9898" strokeWidth="2" />
      <path d="M55 884l9-3v6z" fill="#ff9090" />
      <path d="M86 880v-5" stroke="#4080f0" strokeWidth="3" />
      <circle cx="86" cy="882" r="3" fill="#f8e020" stroke="#a09010" />
    </svg>
  );
}

/* ---------- viewport ---------- */

const ticks = ['0.0455', '0.0417', '0.038', '0.0342', '0.0304', '0.0266', '0.0228', '0.019', '0.0152', '0.0114', '0.00759', '0.0038', '7.2e-07'];

function Legend() {
  return (
    <div className="absolute top-[195px] right-px flex flex-col items-end font-['Liberation_Sans','Noto_Sans_CJK_SC',sans-serif] text-[16px] leading-5 font-bold text-[#0a9af0]">
      <p className="pr-[23px]">MegaPa</p>
      <div className="mt-[26px] flex pr-[22px]">
        <ul>
          {ticks.map((t) => (
            <li key={t} className="flex h-[30px] items-start justify-end gap-[9px]">
              <span>{t}</span>
              <span className="mt-[10px] h-px w-[7px] bg-black" />
            </li>
          ))}
        </ul>
        <div className="mt-[11px] h-[359px] w-[47px] bg-[linear-gradient(#ff0000,#ffff00_19%,#00ff00_39%,#00ffff_59%,#0000ff_80%,#ff00ff)]" />
      </div>
      <div className="mt-[14px] flex items-center">
        <span className="text-[18px] font-medium">屈服应力: </span>
        <span className="ml-1">248</span>
        <Icon w={24} h={10}>
          <path d="M0 4.500h24" stroke="#f00" />
          <path d="M4 4.500l12-4v8z" fill="#f00" />
        </Icon>
      </div>
    </div>
  );
}

function StudyInfo() {
  return (
    <div className="absolute top-[8px] left-6 font-['Liberation_Sans','Noto_Sans_CJK_SC',sans-serif] text-[17px] leading-[19px] font-bold whitespace-nowrap text-[#0a9af0]">
      <p className="text-[18px]">零件快速设计.par, 静态研究 1, 不锈钢 316</p>
      <p>应力 - 节点</p>
      <p>云图: Von Mises 应力</p>
      <p>变形: 20.47</p>
      <p>日期: 2021年10月10日 13:46</p>
    </div>
  );
}

function Viewport() {
  return (
    <div className="relative min-h-[719px] flex-1 overflow-hidden bg-[#fbfdfc]">
      <Model />
      <StudyInfo />
      <FeatureTree />
      <Legend />
      <ViewCube />
    </div>
  );
}

function DocumentArea() {
  return (
    <div className="flex flex-1 flex-col">
      <div className="flex h-[30px] items-end justify-between bg-[#707070] pl-[6px] text-[15px]">
        <div className="flex h-[29px] items-center gap-[3px] rounded-t border border-b-0 border-[#8c8c8c] bg-[#cbcbcb] pr-[2px] pl-[6px]">
          <Icon w={22}>
            <path d="M1 9l6-3V2l4-1 4 1v6l6 4v7l-4 2-7-4-9-4z" fill="#30a8e8" />
            <path d="M7 2l4-1 4 1-4 2zM1 9l6-2 4 2-6 2zM15 10l6 3-5 1-5-3z" fill="#90dcff" />
          </Icon>
          <span>零件快速设计.par</span>
          <button aria-label="关闭标签" className="ml-2"><Icon w={12}><path d="M1 1l10 10M11 1L1 11" stroke="#101010" strokeWidth="2" /></Icon></button>
        </div>
        <div className="flex h-7 items-center gap-[10px] pr-[3px]">
          <button aria-label="上一标签"><Icon w={7} h={11}><path d="M6 1v9L1 5.500z" stroke="#f0f0f0" /></Icon></button>
          <button aria-label="下一标签"><Icon w={7} h={11}><path d="M1 1v9l5-4.500z" stroke="#f0f0f0" /></Icon></button>
          <button aria-label="标签列表"><Icon w={10} h={5}><path d="M0 0h10L5 5z" fill="#f4f4f4" /></Icon></button>
          <button aria-label="关闭窗口"><Icon w={13}><path d="M1 1l11 11M12 1L1 12" stroke="#f0f0f0" strokeWidth="2" /></Icon></button>
        </div>
      </div>
      <div className="flex flex-1 flex-col border border-[#3c3c3c] bg-gradient-to-b from-[#c6c2c2] to-[#a2a2a2] px-[5px] py-[3px]">
        <Viewport />
      </div>
    </div>
  );
}

function PromptBar() {
  return (
    <div className="border-t-[9px] border-[#545454]">
      <div className="flex h-7 items-stretch bg-[#7a7a7a] text-white">
        <label htmlFor="prompt" className="flex w-[88px] items-center gap-[6px] pl-[6px] text-[15px] font-medium">
          <Icon w={25} h={11}>
            <path d="M.5.5h24v10H.5z" fill="#fff" stroke="#1a50a0" />
            <path d="M1 1h23v2H1z" fill="#3a78c8" />
            <path d="M3 7h5M10 7h1M13 5v4M16 7h3M21 7h2" stroke="#4878b8" strokeWidth="2" />
          </Icon>
          提示条
        </label>
        <input id="prompt" readOnly className="flex-1 border-t border-l border-[#a0a0a0] bg-white px-1 text-black" />
        <div className="flex w-5 flex-col items-center justify-around bg-[#f0f0f0] py-[3px]">
          <button aria-label="向上"><Icon w={8} h={6}><path d="M1 5l3-4 3 4" stroke="#404040" strokeWidth="2" /></Icon></button>
          <button aria-label="向下"><Icon w={8} h={6}><path d="M1 1l3 4 3-4" stroke="#404040" strokeWidth="2" /></Icon></button>
        </div>
        <div className="flex w-[127px] items-center justify-between pr-1 pl-[9px] font-['Liberation_Serif',serif] font-bold">
          <button aria-label="增大字体" className="flex text-[20px] leading-6">A<Icon w={4} h={12}><path d="M0 4h4L2 1z" fill="#fff" /></Icon></button>
          <button aria-label="减小字体" className="flex items-end text-[14px] leading-4">A<Icon w={5} h={20}><path d="M0 3h5L2.500 6z" fill="#fff" /></Icon></button>
          <button aria-label="折叠"><Icon w={10}><path d="M1 5l4-4 4 4M1 9.500l4-4 4 4" stroke="#fff" strokeWidth="1.500" /></Icon></button>
          <button aria-label="选项"><Icon w={11} h={10}><path d="M0 1h11" stroke="#fff" strokeWidth="2" /><path d="M0 4h11L5.500 10z" fill="#fff" /></Icon></button>
          <button aria-label="自动隐藏"><Icon w={9} h={14}><path d="M2 1h5v7H2zM0 8.500h9M4.500 9v5M6 1v7" stroke="#fff" strokeWidth="1.500" /></Icon></button>
          <button aria-label="关闭提示条"><Icon w={10}><path d="M1 1l8 8M9 1L1 9" stroke="#fff" strokeWidth="2" /></Icon></button>
        </div>
      </div>
    </div>
  );
}

/* ---------- side tabs ---------- */

function SideTab({ label, height, active, children }: { label: string; height: string; active?: boolean; children: ReactNode }) {
  return (
    <button className={`flex w-full flex-col items-center gap-[5px] rounded-l border border-r-0 border-[#5c5c5c] bg-[#cdcdcd] pt-[5px] ${height}`}>
      {children}
      <span className={`text-[15px] leading-5 [text-orientation:sideways] [writing-mode:vertical-rl] ${active ? 'text-black' : 'text-[#7e7e7e]'}`}>{label}</span>
    </button>
  );
}

function SidePanel() {
  return (
    <nav className="flex w-8 shrink-0 flex-col bg-[#707070] pt-[6px] pl-[2px]">
      <SideTab label="传感器" height="h-[84px]">
        <Icon w={26} h={22}>
          <path d="M.5.5h25v21H.5z" fill="#b0b0b0" stroke="#888" />
          <path d="M4 2v10M9 2v6M14 2v6M20 2v8" stroke="#fff" strokeWidth="3" />
          <path d="M2 20c1-13 20-15 23 0z" fill="#fff" stroke="#909090" />
          <path d="M12 10l6 9" stroke="#808080" strokeWidth="2" />
        </Icon>
      </SideTab>
      <button aria-label="帮助内容" className="flex h-[59px] items-center justify-center pt-1">
        <Icon w={26} h={20}>
          <path d="M1 1h8l2 2h14v16H1z" fill="#f0f0f0" />
          <path d="M9 8c0-4 8-4 8 0 0 3-4 2-4 5M13 15v3" stroke="#808080" strokeWidth="2.500" />
        </Icon>
      </button>
      <SideTab label="特征库" height="h-[98px]">
        <Icon w={26} h={22}>
          <path d="M1 1h15v17H1z" fill="#dcdcdc" stroke="#888" strokeWidth="1.500" />
          <path d="M5 1v17M13 11h12v10H13z" fill="#e8e8e8" stroke="#888" strokeWidth="1.500" />
          <path d="M17 14h5v4h-5z" fill="#888" />
        </Icon>
      </SideTab>
      <div className="h-4" />
      <SideTab label="仿真" height="h-[70px]" active>
        <Icon w={20}>
          <defs>
            <radialGradient id="sim" cx="0.2" cy="0.8" r="1">
              <stop offset="0.15" stopColor="#e00808" /><stop offset="0.3" stopColor="#ffa000" /><stop offset="0.42" stopColor="#fff040" />
              <stop offset="0.55" stopColor="#a0e0f0" /><stop offset="0.75" stopColor="#5080e8" /><stop offset="1" stopColor="#5828a8" />
            </radialGradient>
          </defs>
          <path d="M1 1h18v18H1z" fill="url(#sim)" stroke="#184890" strokeWidth="2" />
        </Icon>
      </SideTab>
      <div className="h-4" />
      <SideTab label="图层" height="h-[70px]">
        <Icon w={24} h={20}>
          <path d="M4 4h18v14H4z" fill="#ddd" stroke="#888" />
          <path d="M1 1h18v14H1z" fill="#f4f4f4" stroke="#888" />
          <circle cx="10" cy="9" r="3" stroke="#888" />
          <path d="M4 6l3-2M13 3h4v4h-4z" stroke="#888" />
        </Icon>
      </SideTab>
      <div className="h-4" />
      <SideTab label="零件族" height="h-[85px]">
        <Icon w={24} h={20}>
          <path d="M10 1h6v5h7v8H10zM5 7h6v4h5v6H5zM1 12h5v3h4v4H1z" fill="#f0f0f0" stroke="#808080" strokeWidth="1.500" />
        </Icon>
      </SideTab>
    </nav>
  );
}

/* ---------- status bar ---------- */

const viewTools: { name: string; art: ReactNode }[] = [
  { name: '执行', art: <path d="M1 17c0-7 4-9 9-9V3l9 7-9 7v-4c-4 0-6 1-9 4z" fill="#c8e8ff" stroke="#2060a0" /> },
  {
    name: '区域缩放',
    art: (
      <>
        <path d="M1 1h17v17H1z" fill="#f4f8ff" stroke="#2060c0" /><path d="M1 1h17v3H1z" fill="#2060c0" />
        <circle cx="10" cy="11" r="5" fill="#90c8f0" stroke="#305080" strokeWidth="1.500" /><path d="M14 15l4 4" stroke="#c07020" strokeWidth="3" />
        <path d="M4 6v3M4 6h3M4 17h3" stroke="#000" />
      </>
    ),
  },
  {
    name: '缩放',
    art: (
      <>
        <path d="M13 13l6 6" stroke="#e08020" strokeWidth="4" /><circle cx="8" cy="8" r="6.500" fill="#90c8f0" stroke="#406890" strokeWidth="2" />
        <path d="M5 7h6M8 4v6M5 12h6" stroke="#103060" strokeWidth="1.500" />
      </>
    ),
  },
  {
    name: '适合',
    art: (
      <>
        <path d="M1 1h18v18H1z" fill="#f4f8ff" stroke="#2060c0" /><path d="M1 1h18v3H1z" fill="#2060c0" />
        <path d="M5 10V7h3M12 7h3v3M5 13v4h3M12 17h3v-4M6 8l8 8M14 8l-8 8" stroke="#1848a0" strokeWidth="1.500" />
      </>
    ),
  },
  {
    name: '平移',
    art: (
      <>
        <path d="M1 1h18v18H1z" fill="#d8d8d8" stroke="#2060c0" /><path d="M1 1h18v3H1z" fill="#2060c0" />
        <path d="M4 11c2-6 10-7 13-1l1 9h-7c-2-4-5-4-7-8z" fill="#e8d8c8" stroke="#705848" />
        <path d="M7 8l2 4M11 7l1 4M14 8v4" stroke="#705848" />
      </>
    ),
  },
  {
    name: '旋转',
    art: (
      <>
        <path d="M1 13c1-7 6-10 12-9l2-3 1 8-6-1 1-2c-4 0-6 3-7 7z" fill="#30c030" /><path d="M19 7c0 7-5 11-11 10l-2 2-1-7 6 1-1 2c4 0 6-3 7-7z" fill="#189018" />
        <circle cx="10" cy="11" r="4" fill="#50b8f8" stroke="#e0f4ff" />
      </>
    ),
  },
  {
    name: '视图方向',
    art: (
      <>
        <path d="M1 9l7-6v4l5-4 4 3-4 6 5 3-6 3-6-3-2 2z" fill="#70b8f0" stroke="#2868b0" /><path d="M12 19h7l-3-6z" fill="#20c020" />
      </>
    ),
  },
  {
    name: '视图样式',
    art: (
      <>
        <path d="M6 1h13v14H6z" fill="#d0e8ff" stroke="#3070c0" /><path d="M1 6h13v13H1z" fill="#f4e820" stroke="#908000" /><path d="M4 8h7l-2 2 3 5-2 2-4-5-2 2z" fill="#109020" />
      </>
    ),
  },
  {
    name: '颜色管理',
    art: (
      <>
        <path d="M1 1h12v12H1z" fill="#303030" stroke="#70a8f0" strokeWidth="1.500" /><path d="M7 6h12v13H7z" fill="url(#gold)" stroke="#b07800" />
      </>
    ),
  },
];

function RoundButton({ label, d }: { label: string; d: string }) {
  return (
    <button aria-label={label}>
      <Icon w={18}>
        <circle cx="9" cy="9" r="8" fill="#d4e8fc" stroke="#7ca8d8" strokeWidth="2" />
        <path d={d} stroke="#101828" strokeWidth="2" />
      </Icon>
    </button>
  );
}

function StatusBar() {
  return (
    <footer className="flex h-[27px] items-center border-t-2 border-[#5a5a5a] bg-gradient-to-b from-[#4a4a4a] to-[#2e2e2e]">
      <div className="flex-1" />
      <div className="flex h-[22px] w-[334px] items-center justify-center border-x border-[#e0e0e0] text-[15px] text-[#e8e8e8]">选择了 1 项</div>
      <div className="ml-6 flex w-[716px] items-center">
        <input
          aria-label="查找命令"
          placeholder="查找命令"
          className="h-[23px] w-[178px] shrink-0 border-l-2 border-[#b0b0b0] bg-white px-[2px] text-[15px] placeholder:text-[#b4b4b4]"
        />
        <div className="flex h-6 items-center gap-2 border-r border-[#e8e8e8] pr-[6px] pl-1">
          {viewTools.map((t) => (
            <button key={t.name} aria-label={t.name}><Icon w={20}>{t.art}</Icon></button>
          ))}
        </div>
        <div className="flex h-6 items-center gap-1 border-r border-[#e8e8e8] px-[3px]">
          <RoundButton label="缩小" d="M5 9h8" />
          <input
            type="range"
            aria-label="缩放比例"
            defaultValue={45}
            className="h-5 w-[142px] appearance-none bg-[linear-gradient(#fff,#fff)] bg-[length:100%_1px] bg-center bg-no-repeat [&::-webkit-slider-thumb]:h-4 [&::-webkit-slider-thumb]:w-3 [&::-webkit-slider-thumb]:appearance-none [&::-webkit-slider-thumb]:rounded-t-sm [&::-webkit-slider-thumb]:rounded-b-full [&::-webkit-slider-thumb]:border [&::-webkit-slider-thumb]:border-[#e0f0ff] [&::-webkit-slider-thumb]:bg-[#5c88b8]"
          />
          <RoundButton label="放大" d="M5 9h8M9 5v8" />
        </div>
        <button aria-label="视频" className="flex h-6 w-[31px] items-center justify-center border-r border-[#e8e8e8]">
          <Icon w={18} h={12}><rect width="18" height="12" rx="3" fill="#f00808" /><path d="M7 3.500v5l4-2.500z" fill="#fff" /></Icon>
        </button>
        <button aria-label="录制" className="flex h-6 w-[31px] items-center justify-center border-r border-[#e8e8e8]">
          <Icon w={18}><circle cx="9" cy="9" r="8" fill="#404040" stroke="#d0d0d0" /><circle cx="9" cy="9" r="6" fill="#e82020" /></Icon>
        </button>
        <button aria-label="上传" className="flex h-6 flex-1 items-center justify-center">
          <Icon w={16} h={18}><path d="M5 11V7H1l7-7 7 7h-4v4z" fill="#70c818" /><path d="M1 14h14v3H1z" fill="#fff" /></Icon>
        </button>
      </div>
    </footer>
  );
}

export default function App() {
  return (
    <div className="flex min-h-screen flex-col overflow-hidden bg-[#707070] font-['Open_Sans','Noto_Sans_CJK_SC',sans-serif] text-black">
      <Gradients />
      <Header />
      <Ribbon />
      <div className="flex h-8 border-t-[3px] border-[#707070] bg-[#525252]">
        <div className="w-[34.700%]" />
        <button className="flex h-7 w-[106px] items-center gap-[6px] border border-[#787878] bg-gradient-to-b from-[#c4c4c4] to-[#aeaeae] pl-[7px] text-[15px] whitespace-nowrap">
          <Icon w={4} h={16}><path d="M0 0h4v4H0zM0 6h4v4H0zM0 12h4v4H0z" fill="#383838" /></Icon>
          <Icon w={15} h={16}>
            <path d="M0 0h9v16H0z" fill="url(#rainbow)" />
            <Film x={5} y={2} w={10} h={12} />
          </Icon>
          动画播放
        </button>
      </div>
      <div className="flex flex-1">
        <div className="flex min-w-0 flex-1 flex-col">
          <DocumentArea />
          <PromptBar />
        </div>
        <SidePanel />
      </div>
      <StatusBar />
    </div>
  );
}
